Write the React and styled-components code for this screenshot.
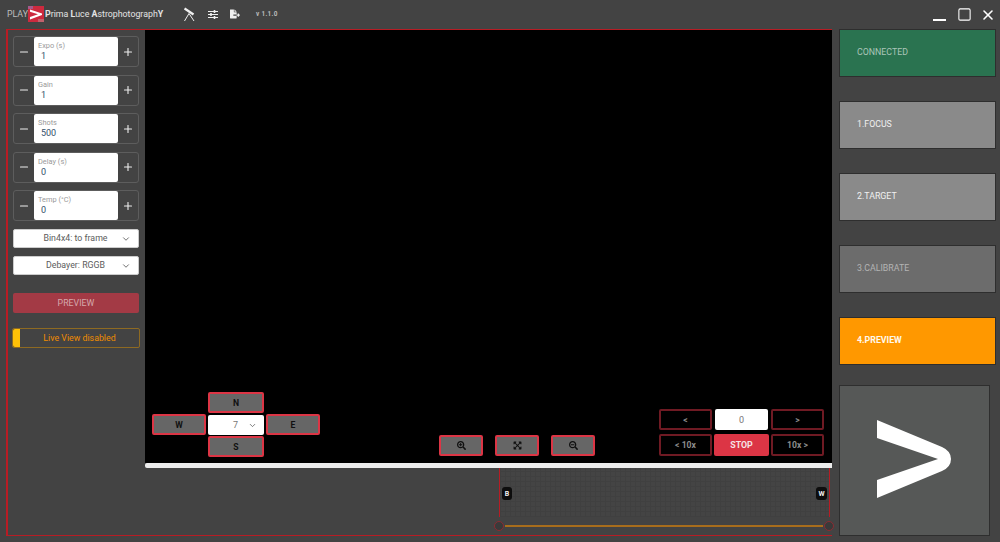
import React from 'react';
import styled, { createGlobalStyle } from 'styled-components';
import { FaFileExport, FaSearchPlus, FaSearchMinus, FaExpandArrowsAlt } from 'react-icons/fa';
import { ChevronDown, Minus, Plus, X, Square } from 'lucide-react';

const FONT = '"Roboto", "Open Sans", sans-serif';

const Global = createGlobalStyle`
  html, body { margin: 0; padding: 0; background: #434343; }
  body { font-family: ${FONT}; }
  * { box-sizing: border-box; }
`;
const Page = styled.div`
  width: 1000px; height: 542px; display: flex; flex-direction: column; overflow: hidden; background: #434343;
`;
const TitleBar = styled.header`
  height: 29px; flex: none; display: flex; align-items: center; padding-left: 7px; color: #e4e4e4;
`;
const Brand = styled.div`
  display: flex; align-items: center; font-size: 8.8px; width: 177px; height: 29px; padding-bottom: 1px; margin-top: -1px;
  b { font-weight: 700; }
`;
const Play = styled.span`color: #bdbdbd; font-size: 8.8px;`;
const Tools = styled.div`display: flex; align-items: center; gap: 12.5px; color: #f0f0f0; margin-top: -1px;`;
const Version = styled.span`font-size: 6.4px; font-weight: 700; color: #bbb; margin-left: 3.5px; letter-spacing: .3px;`;
const WindowButtons = styled.div`
  margin-left: auto; display: flex; align-items: center; gap: 8px; padding-right: 4px; color: #fff;
`;
const MinLine = styled.span`display: block; width: 13px; height: 2px; background: #fff; margin-top: 10px; margin-right: 3px;`;

const Main = styled.div`display: flex; flex: 1; min-height: 0;`;
const Frame = styled.div`
  margin-left: 6px; width: 826px; height: 507px; display: flex;
  border-left: 2px solid #b81c24; border-top: 1px solid #b81c24; border-bottom: 1px solid #b81c24; position: relative;
`;
const Sidebar = styled.aside`
  width: 137px; flex: none; padding: 6px 6px 0 5px; display: flex; flex-direction: column;
`;
const Stepper = styled.div`
  height: 31px; flex: none; margin-bottom: 7.6px; display: flex; border: 1px solid #5d5d5d; border-radius: 3px;
`;
const StepButton = styled.button`
  width: 20px; flex: 1; padding: 0; border: 0; background: transparent; color: #eee; display: flex; align-items: center; justify-content: center;
`;
const StepField = styled.div`
  width: 84px; flex: none; background: #fff; border-radius: 2px; padding: 4px 4px 0 4px; display: flex; flex-direction: column;
`;
const StepLabel = styled.span`font-size: 7.4px; line-height: 9px; color: #9a9a9a;`;
const StepValue = styled.span`font-size: 9px; line-height: 12px; color: #33506a; padding-left: 3px;`;
const SelectBox = styled.div`
  height: 19px; flex: none; width: 126px; margin-bottom: ${p => p.$mb}px; background: #fff; border-radius: 2px; display: flex; align-items: center;
  justify-content: center; font-size: 8.8px; color: #5c5c5c; position: relative; padding-right: 1px; border: 1px solid #ccc;
  svg { position: absolute; right: 7px; top: 4px; color: #555; }
`;
const PreviewButton = styled.button`
  width: 126px; height: 20px; flex: none; border: 0; border-radius: 2px; background: #a33a45; color: #d5a8ac;
  font: 8.8px ${FONT}; padding: 0; margin-bottom: 15px;
`;
const LiveView = styled.div`
  margin-left: -1px; width: 128px; height: 20px; flex: none; display: flex; align-items: center; border: 1px solid #8e6a22; border-radius: 2px;
  color: #f08c00; font-size: 8.8px;
`;
const LiveKnob = styled.span`width: 7px; align-self: stretch; background: #ffc107; border-radius: 2px 0 0 2px; flex: none;`;
const LiveText = styled.span`flex: 1; text-align: center;`;

const Center = styled.div`flex: 1; display: flex; flex-direction: column; min-width: 0;`;
const Viewer = styled.div`height: 433px; flex: none; background: #000; position: relative;`;
const Progress = styled.div`height: 5px; flex: none; background: #ececec; border-radius: 2px 0 0 2px;`;
const Lower = styled.div`flex: 1; display: flex; justify-content: flex-end; padding-right: 1px; position: relative;`;
const HistoWrap = styled.div`width: 333px; display: flex; flex-direction: column;`;
const Histogram = styled.div`
  height: 49px; flex: none; position: relative; margin: 0 1px 0 1px;
  border-left: 1px solid #b81c24; border-right: 1px solid #b81c24;
  background-color: #444;
  background-image: repeating-linear-gradient(0deg, #404040 0 1px, transparent 1px 5px), repeating-linear-gradient(90deg, #404040 0 1px, transparent 1px 5px);
`;
const Badge = styled.span`
  position: absolute; top: 19px; ${p => p.$side}: 2px; width: ${p => p.$w}px; height: 13px; background: #0d0d0d; color: #eee; border-radius: 3px;
  font-size: 7px; font-weight: 700; display: flex; align-items: center; justify-content: center;
`;
const Slider = styled.div`height: 18px; display: flex; align-items: center; position: relative;`;
const SliderLine = styled.div`flex: 1; height: 2px; background: #a86d1c; margin: 0 1px;`;
const Knob = styled.span`
  width: 10px; height: 10px; border-radius: 50%; background: #3a3a3a; border: 1px solid #8b2c33; flex: none; margin-left: ${p => p.$l}px; margin-right: ${p => p.$r}px;
`;

const Overlay = styled.div`position: absolute; display: grid;`;
const DirGrid = styled(Overlay)`
  left: 7px; top: 362px; grid-template-columns: 54px 56px 54px; grid-template-rows: 21px 21px 21px; gap: 1px 2px;
`;
const ZoomRow = styled(Overlay)`left: 294px; top: 405px; grid-template-columns: repeat(3, 44px); column-gap: 12px;`;
const FocusGrid = styled(Overlay)`left: 514px; top: 379px; grid-template-columns: 53px 53px 53px; grid-template-rows: 21px 22px; gap: 4px 3px;`;
const CtlButton = styled.button`
  padding: 0; height: 21px; border: 2px solid #dc3545; border-radius: 2px; background: #666; color: #111; font: 700 8.6px ${FONT};
  display: flex; align-items: center; justify-content: center;
  grid-column: ${p => p.$col || 'auto'}; grid-row: ${p => p.$row || 'auto'};
`;
const DirSelect = styled.div`
  grid-column: 2; grid-row: 2; background: #fff; border-radius: 2px; height: 20px; margin-top: 1px; color: #777; font-size: 9px; display: flex; align-items: center; justify-content: center; position: relative; padding-right: 1px;
  svg { position: absolute; right: 7px; top: 6px; color: #555; }
`;
const FocusButton = styled.button`
  padding: 0; border: 2px solid #6f1a23; border-radius: 2px; background: #000; color: #8d8d8d; font: 700 8.6px ${FONT};
`;
const FocusValue = styled.div`background: #fff; border-radius: 2px; color: #777; font-size: 9px; display: flex; align-items: center; justify-content: center;`;
const StopButton = styled.button`
  padding: 0; margin: 0 -1px; border: 0; border-radius: 2px; background: #dc3545; color: #f5e3e5; font: 700 8.8px ${FONT};
`;

const RightCol = styled.aside`
  width: 157px; margin-left: 7px; flex: none; display: flex; flex-direction: column;
`;
const StepTile = styled.div`
  height: 48px; flex: none; margin-bottom: 24px; background: ${p => p.$bg}; color: ${p => p.$fg}; font-size: 8.8px; font-weight: ${p => p.$bold ? 700 : 400};
  border: 1px solid #2e2e2e; display: flex; align-items: center; padding: 0 0 2px 17px;
`;
const BigButton = styled.button`
  width: 151px; height: 151px; margin-top: -4px; padding: 0 0 3px; border: 1px solid #2e2e2e; background: #565857; display: flex; align-items: center; justify-content: center;
`;

const steppers = [['Expo (s)', '1'], ['Gain', '1'], ['Shots', '500'], ['Delay (s)', '0'], ['Temp (°C)', '0']];
const tiles = [
  ['CONNECTED', '#2a7350', '#aac5b8'],
  ['1.FOCUS', '#8a8a8a', '#f0f0f0'],
  ['2.TARGET', '#8a8a8a', '#f0f0f0'],
  ['3.CALIBRATE', '#6c6c6c', '#b4b4b4'],
  ['4.PREVIEW', '#ff9800', '#fff8ec', true],
];

const Logo = () => (
  <svg width="16" height="16" viewBox="0 0 16 16" style={{ flex: 'none', margin: '0 1px 0 0' }}>
    <rect width="16" height="16" fill="#cc2a3e" />
    <path d="M0 0h5v3H0z" fill="#a45a8c" />
    <path d="M10 13h6v3h-6z" fill="#c2606c" />
    <path d="M2 3.5 L14 7.5 V9 L2 13.5 V11 L10 8.3 L2 5.8 Z" fill="#fff" />
  </svg>
);
const Telescope = () => (
  <svg width="11" height="15" viewBox="0 0 11 15" fill="none" stroke="#f0f0f0" strokeWidth="1">
    <path d="M0.5 1.5 L9.5 7.5" strokeWidth="2.4" />
    <path d="M5 6.5 L0.5 14 M5 6.5 L10 14" />
  </svg>
);
const Sliders = () => (
  <svg width="10" height="9" viewBox="0 0 10 9" stroke="#f0f0f0" strokeWidth="1">
    <path d="M0 1.5h10M0 4.5h10M0 7.5h10" />
    <path d="M6.5 0v3M3 3v3M6.5 6v3" strokeWidth="1.6" />
  </svg>
);
const BigChevron = () => (
  <svg width="78" height="78" viewBox="0 0 78 78">
    <path d="M1 0 L66 27 Q75 31 75 39 Q75 47 66 51 L1 78 V60 L62 39 L1 18 Z" fill="#fff" />
  </svg>
);

export default function App() {
  return (
    <Page>
      <Global />
      <TitleBar>
        <Brand>
          <Play>PLAY</Play><Logo />
          <span><b>P</b>rima <b>L</b>uce <b>A</b>strophotograph<b>Y</b></span>
        </Brand>
        <Tools>
          <Telescope />
          <Sliders />
          <FaFileExport size={10} />
          <Version>v 1.1.0</Version>
        </Tools>
        <WindowButtons>
          <MinLine />
          <Square size={15} strokeWidth={1.7} />
          <X size={16} strokeWidth={2.4} />
        </WindowButtons>
      </TitleBar>
      <Main>
        <Frame>
          <Sidebar>
            {steppers.map(([l, v]) => (
              <Stepper key={l}>
                <StepButton><Minus size={12} strokeWidth={2.2} /></StepButton>
                <StepField><StepLabel>{l}</StepLabel><StepValue>{v}</StepValue></StepField>
                <StepButton><Plus size={12} strokeWidth={2.2} /></StepButton>
              </Stepper>
            ))}
            <SelectBox $mb={8}>Bin4x4: to frame<ChevronDown size={10} /></SelectBox>
            <SelectBox $mb={18}>Debayer: RGGB<ChevronDown size={10} /></SelectBox>
            <PreviewButton>PREVIEW</PreviewButton>
            <LiveView><LiveKnob /><LiveText>Live View disabled</LiveText></LiveView>
          </Sidebar>
          <Center>
            <Viewer>
              <DirGrid>
                <CtlButton $col="2" $row="1">N</CtlButton>
                <CtlButton $col="1" $row="2">W</CtlButton>
                <DirSelect>7<ChevronDown size={9} /></DirSelect>
                <CtlButton $col="3" $row="2">E</CtlButton>
                <CtlButton $col="2" $row="3">S</CtlButton>
              </DirGrid>
              <ZoomRow>
                <CtlButton><FaSearchPlus size={9} /></CtlButton>
                <CtlButton><FaExpandArrowsAlt size={9} /></CtlButton>
                <CtlButton><FaSearchMinus size={9} /></CtlButton>
              </ZoomRow>
              <FocusGrid>
                <FocusButton>&lt;</FocusButton>
                <FocusValue>0</FocusValue>
                <FocusButton>&gt;</FocusButton>
                <FocusButton>&lt; 10x</FocusButton>
                <StopButton>STOP</StopButton>
                <FocusButton>10x &gt;</FocusButton>
              </FocusGrid>
            </Viewer>
            <Progress />
            <Lower>
              <HistoWrap>
                <Histogram>
                  <Badge $side="left" $w={10}>B</Badge>
                  <Badge $side="right" $w={11}>W</Badge>
                </Histogram>
                <Slider><Knob $l={-4} $r={0} /><SliderLine /><Knob $l={0} $r={-3} /></Slider>
              </HistoWrap>
            </Lower>
          </Center>
        </Frame>
        <RightCol>
          {tiles.map(([t, bg, fg, bold]) => (
            <StepTile key={t} $bg={bg} $fg={fg} $bold={bold}>{t}</StepTile>
          ))}
          <BigButton><BigChevron /></BigButton>
        </RightCol>
      </Main>
    </Page>
  );
}
